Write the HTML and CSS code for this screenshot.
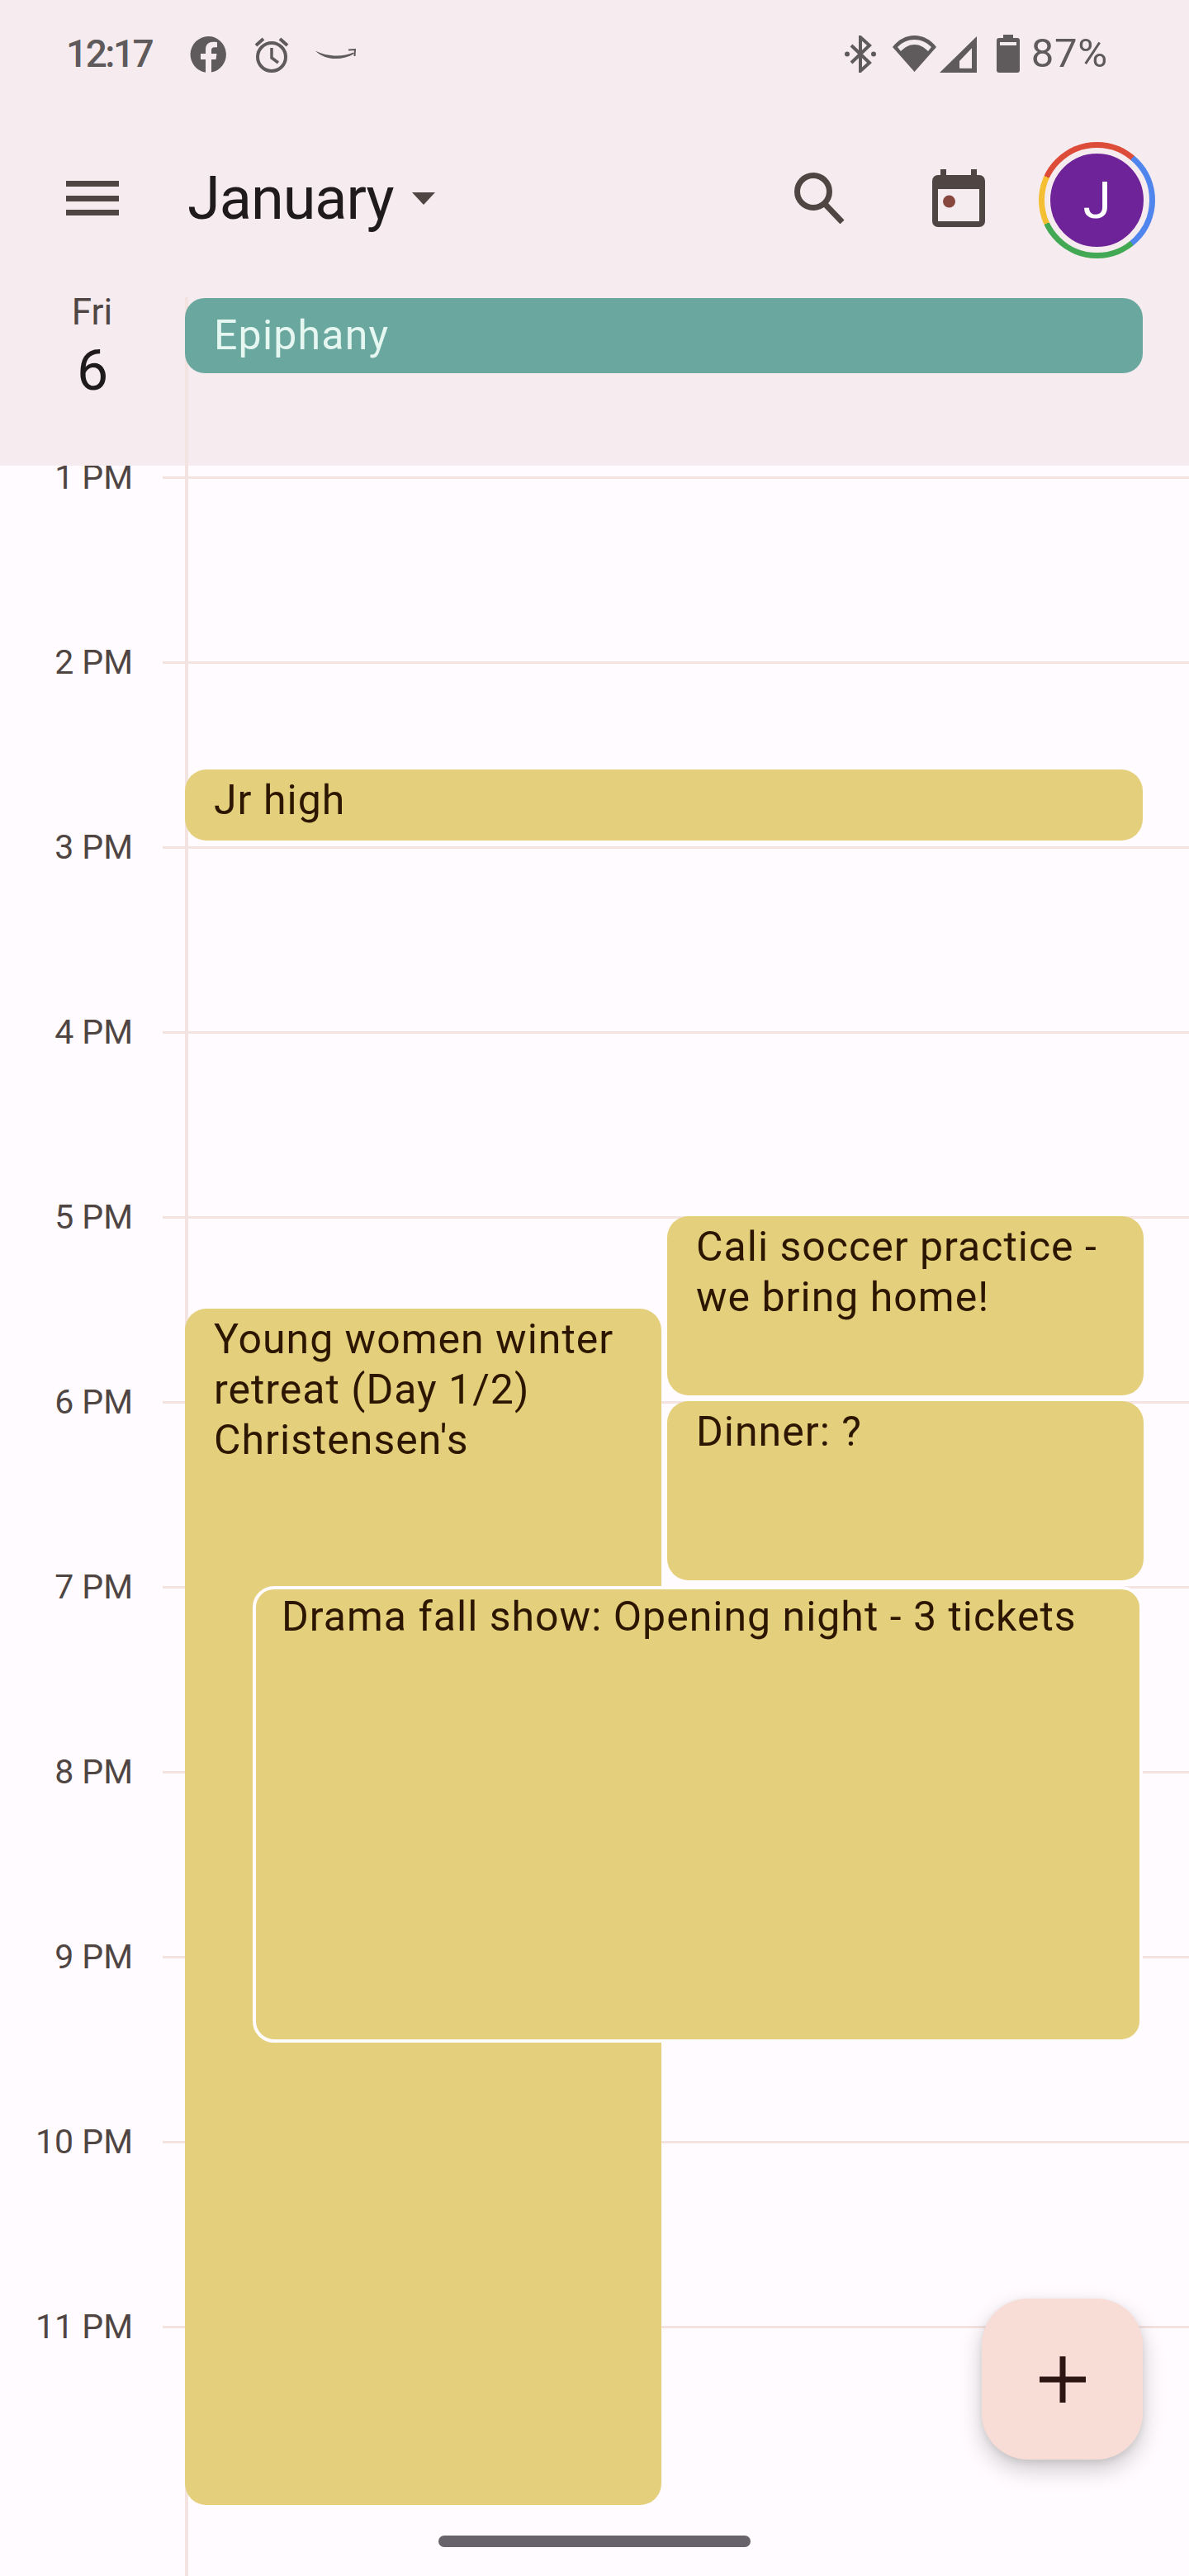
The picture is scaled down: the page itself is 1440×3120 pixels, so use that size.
FILE: index.html
```html
<!DOCTYPE html>
<html>
<head>
<title>Calendar</title>
<link rel="stylesheet" href="styles.css">
</head>
<body>

<div class="phone">

  <header class="top">
    <div class="status">
      <div class="status-left">
        <span class="clock">12:17</span>
        <svg class="ic-fb" viewBox="0 0 44 44"><path fill="#5f5a5c" d="M22 0a22 22 0 0 1 4 43.600V28h5.500l1-7H26v-4c0-2.200 1-3.800 4-3.800h3V7.200c-1-.2-3-.4-5-.4-5.500 0-9 3.200-9 9V21h-6v7h6v15.700A22 22 0 0 1 22 0z"/></svg>
        <svg class="ic-alarm" viewBox="0 0 44 44"><g fill="none" stroke="#5f5a5c" stroke-width="4"><circle cx="22" cy="25" r="17"/><path d="M22 14v12l8 6" stroke-width="3.500"/><path d="M3 11l9-8M41 11l-9-8"/></g></svg>
        <svg class="ic-smile" viewBox="0 0 50 14"><path fill="#5f5a5c" d="M0 2.500C12 9 32 11 46 4.500l1 1.500C32 15 11 14 0 2.500z"/><path fill="none" stroke="#5f5a5c" stroke-width="2" d="M40 1.500l8-.5-.5 8"/></svg>
      </div>
      <div class="status-right">
        <svg class="ic-bt" viewBox="0 0 38 45"><g fill="none" stroke="#5f5a5c" stroke-width="4"><path d="M8 12l22 21-11 10V2l11 10L8 33"/></g><circle cx="3" cy="22.500" r="3" fill="#5f5a5c"/><circle cx="35" cy="22.500" r="3" fill="#5f5a5c"/></svg>
        <svg class="ic-wifi" viewBox="0 0 53 44"><path fill="#5f5a5c" d="M26.500 44L0 14C7 5 16 0 26.500 0S46 5 53 14z"/><path fill="#f5ecef" d="M6 14C12 8 19 5 26.500 5S41 8 47 14l-4 5C38 14 33 11 26.500 11S15 14 10 19z"/></svg>
        <svg class="ic-signal" viewBox="0 0 45 44"><path fill="#5f5a5c" d="M45 0v44H0zM24 30v8.700h15V14.300z" fill-rule="evenodd"/></svg>
        <svg class="ic-battery" viewBox="0 0 28 46"><path fill="#5f5a5c" d="M8 0h12v4h5a3 3 0 0 1 3 3v36a3 3 0 0 1-3 3H3a3 3 0 0 1-3-3V7a3 3 0 0 1 3-3h5z"/><rect x="4" y="9" width="20" height="4" fill="#f5ecef"/></svg>
        <span class="battery-pct">87%</span>
      </div>
    </div>

    <div class="appbar">
      <div class="burger"><i></i><i></i><i></i></div>
      <div class="month">January</div>
      <div class="caret"></div>
      <svg class="ic-search" viewBox="0 0 62 62"><circle cx="23" cy="23" r="19.500" fill="none" stroke="#4f4543" stroke-width="7"/><path d="M36 37l22 23" stroke="#4f4543" stroke-width="7" fill="none"/></svg>
      <svg class="ic-cal" viewBox="0 0 64 70"><path fill="#4f4543" d="M10 0h7v7h30V0h7v7h3a7 7 0 0 1 7 7v49a7 7 0 0 1-7 7H7a7 7 0 0 1-7-7V14a7 7 0 0 1 7-7h3z"/><rect x="7" y="24" width="50" height="39" fill="#f5ecef"/><circle cx="20.500" cy="39" r="7.500" fill="#87473f"/></svg>
      <div class="avatar"><div class="avatar-face">J</div></div>
    </div>

    <div class="allday">
      <div class="day">
        <div class="day-name">Fri</div>
        <div class="day-num">6</div>
      </div>
      <div class="holiday">Epiphany</div>
    </div>
    <div class="day-rule day-rule-top"></div>
  </header>

  <main class="grid">
    <div class="day-rule"></div>
    <div class="hour"><span class="hour-label">1 PM</span><span class="hour-line"></span></div>
    <div class="hour"><span class="hour-label">2 PM</span><span class="hour-line"></span></div>
    <div class="hour"><span class="hour-label">3 PM</span><span class="hour-line"></span></div>
    <div class="hour"><span class="hour-label">4 PM</span><span class="hour-line"></span></div>
    <div class="hour"><span class="hour-label">5 PM</span><span class="hour-line"></span></div>
    <div class="hour"><span class="hour-label">6 PM</span><span class="hour-line"></span></div>
    <div class="hour"><span class="hour-label">7 PM</span><span class="hour-line"></span></div>
    <div class="hour"><span class="hour-label">8 PM</span><span class="hour-line"></span></div>
    <div class="hour"><span class="hour-label">9 PM</span><span class="hour-line"></span></div>
    <div class="hour"><span class="hour-label">10 PM</span><span class="hour-line"></span></div>
    <div class="hour"><span class="hour-label">11 PM</span><span class="hour-line"></span></div>

    <div class="event ev-jr"><div class="ev-title">Jr high</div></div>
    <div class="event ev-young">
      <div class="ev-title">Young women winter retreat (Day 1/2)</div>
      <div class="ev-place">Christensen's</div>
    </div>
    <div class="event ev-cali"><div class="ev-title">Cali soccer practice - we bring home!</div></div>
    <div class="event ev-dinner"><div class="ev-title">Dinner: ?</div></div>
    <div class="event ev-drama"><div class="ev-title">Drama fall show: Opening night - 3 tickets</div></div>
  </main>

  <button class="fab"><svg viewBox="0 0 56 56"><path d="M24.500 0h7v24.500H56v7H31.500V56h-7V31.500H0v-7h24.500z" fill="#2c1512"/></svg></button>
  <div class="home-bar"></div>
</div>

</body>
</html>
```

FILE: styles.css
```css
* {
  box-sizing: border-box;
}
body {
  margin: 0;
  background-color: #fffbfe;
  font-family: "Roboto", "Liberation Sans", sans-serif;
}
.phone {
  position: relative;
  width: 1440px;
  height: 3120px;
  overflow: hidden;
  display: flex;
  flex-direction: column;
}

/* header */
.top {
  height: 564px;
  flex: none;
  background-color: #f6ecef;
  position: relative;
  z-index: 2;
}
.status {
  height: 172px;
  padding: 42px 98px 0 80px;
  display: flex;
  justify-content: space-between;
  align-items: flex-start;
  color: #5f5a5c;
}
.status-left, .status-right {
  display: flex;
  align-items: flex-start;
}
.clock, .battery-pct {
  font-size: 46px;
  line-height: 46px;
}
.clock {
  width: 150px;
  font-weight: 500;
  letter-spacing: -2.500px;
}
.ic-fb { width: 44px; height: 44px; margin-top: 2px; }
.ic-alarm { width: 44px; height: 44px; margin: 2px 0 0 33px; }
.ic-smile { width: 50px; height: 14px; margin: 17px 0 0 31px; }
.ic-bt { width: 38px; height: 45px; margin-top: 1px; }
.ic-wifi { width: 53px; height: 44px; margin: 1px 0 0 20px; }
.ic-signal { width: 45px; height: 44px; margin: 2px 0 0 4px; }
.ic-battery { width: 28px; height: 46px; margin-left: 24px; }
.battery-pct { margin-left: 14px; font-size: 49px; letter-spacing: 0.800px; }

.appbar {
  height: 136px;
  padding-left: 80px;
  display: flex;
  align-items: center;
  position: relative;
}
.burger {
  width: 64px;
  display: flex;
  flex-direction: column;
  gap: 10.500px;
}
.burger i {
  display: block;
  height: 7px;
  background-color: #4f4543;
}
.month {
  margin: 2px 0 0 83px;
  font-size: 72px;
  letter-spacing: -1px;
  color: #1f1a1c;
  line-height: 80px;
  width: 272px;
}
.caret {
  width: 0;
  height: 0;
  border-left: 14px solid transparent;
  border-right: 14px solid transparent;
  border-top: 15px solid #4f4543;
}
.ic-search { width: 62px; height: 62px; margin-left: 435px; }
.ic-cal { width: 64px; height: 70px; margin-left: 105px; }
.avatar {
  position: absolute;
  left: 1258px;
  top: 0;
  width: 141px;
  height: 141px;
  border-radius: 50%;
  background: conic-gradient(#dd4b39 0 40deg, #5085ed 40deg 141deg, #42a853 141deg 245deg, #f4bf32 245deg 295deg, #dd4b39 295deg 360deg);
  display: flex;
  align-items: center;
  justify-content: center;
}
.avatar-face {
  width: 127px;
  height: 127px;
  border-radius: 50%;
  border: 7px solid #f6ecef;
  background-color: #6f2399;
  color: #fff;
  font-size: 62px;
  font-weight: 400;
  display: flex;
  align-items: center;
  justify-content: center;
}

.allday {
  display: flex;
  align-items: flex-start;
  padding-top: 53px;
}
.day {
  width: 224px;
  text-align: center;
}
.day-name {
  font-size: 44px;
  line-height: 46px;
  color: #4f4543;
  margin: -6px 0 0 -1px;
}
.day-num {
  font-size: 68px;
  line-height: 72px;
  color: #1f1a1c;
  margin-top: 12px;
}
.holiday {
  width: 1160px;
  height: 91px;
  padding: 0 35px;
  border-radius: 24px;
  background-color: #6aa89f;
  color: #e6f6f1;
  font-size: 50px;
  letter-spacing: 1.200px;
  line-height: 90px;
  position: relative;
  z-index: 1;
}
.day-rule {
  position: absolute;
  left: 224px;
  top: 0;
  bottom: 0;
  width: 4px;
  background-color: #f4e4e1;
}
.day-rule-top {
  top: 360px;
}

/* hour grid */
.grid {
  flex: 1;
  position: relative;
}
.hour {
  height: 224px;
  display: flex;
  align-items: center;
  position: relative;
  top: -98px;
}
.hour-label {
  width: 162px;
  padding-right: 1px;
  text-align: right;
  font-size: 41px;
  line-height: 28px;
  color: #4f4543;
}
.hour-line {
  margin-left: 35px;
  flex: 1;
  height: 3px;
  background-color: #f4e4e1;
}

/* events sit by their time on the grid, top 0 = y 564 */
.event {
  position: absolute;
  z-index: 4;
  background-color: #e4d07c;
  border-radius: 26px;
  padding: 7px 35px;
  color: #2d1600;
  font-size: 50px;
  line-height: 61px;
  letter-spacing: 1px;
}
.ev-jr { left: 224px; width: 1160px; top: 368px; height: 86px; }
.ev-young { left: 224px; width: 577px; top: 1021px; height: 1449px; }
.ev-cali { left: 808px; width: 577px; top: 909px; height: 217px; }
.ev-dinner { left: 808px; width: 577px; top: 1133px; height: 217px; }
.ev-drama {
  left: 306px;
  width: 1078px;
  top: 1357px;
  height: 553px;
  border: 4px solid #fffbfe;
  padding: 3px 31px;
}

.fab {
  position: absolute;
  left: 1189px;
  top: 2784px;
  width: 195px;
  height: 195px;
  padding: 0;
  border: none;
  border-radius: 56px;
  background-color: #f8dcd6;
  box-shadow: 0 12px 28px rgba(0, 0, 0, 0.2), 0 3px 8px rgba(0, 0, 0, 0.08);
  display: flex;
  align-items: center;
  justify-content: center;
  z-index: 5;
}
.fab svg {
  width: 56px;
  height: 56px;
}
.home-bar {
  position: absolute;
  left: 531px;
  top: 3071px;
  width: 378px;
  height: 14px;
  border-radius: 7px;
  background-color: #68636a;
  z-index: 5;
}
```
